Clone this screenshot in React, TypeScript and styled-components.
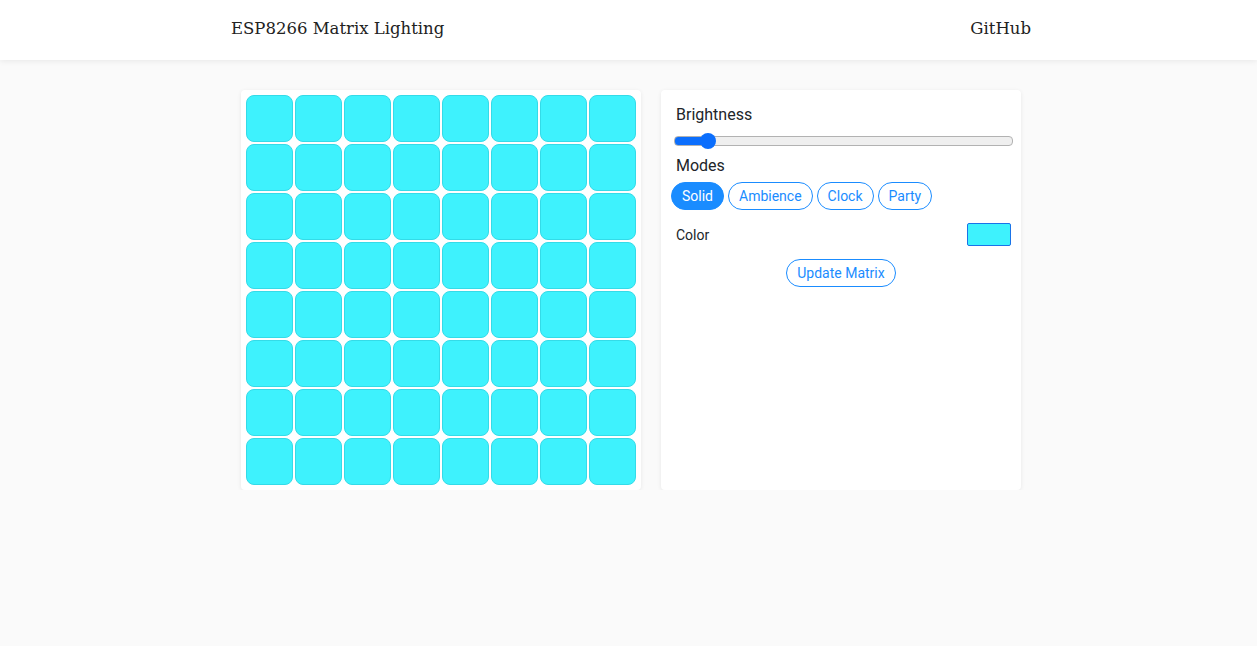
import React, { useState } from 'react';
import styled, { createGlobalStyle } from 'styled-components';

const GlobalStyle = createGlobalStyle`
  html, body {
    margin: 0;
    padding: 0;
    background: #fafafa;
    font-family: Roboto, "Liberation Sans", sans-serif;
    color: #212529;
  }
`;

const Header = styled.header`
  height: 60px;
  background: #ffffff;
  box-shadow: 0 1px 6px rgba(0, 0, 0, 0.08);
  display: flex;
  justify-content: center;
  padding-left: 5px;
`;

const HeaderInner = styled.div`
  width: 800px;
  display: flex;
  align-items: center;
  justify-content: space-between;
  padding-bottom: 4px;
  font-family: "DejaVu Serif", "Liberation Serif", serif;
  font-size: 16.5px;
  color: #222;
`;

const Main = styled.main`
  display: flex;
  justify-content: center;
  gap: 20px;
  padding: 30px 0 0 5px;
`;

const Card = styled.div<{ $w: number }>`
  width: ${({ $w }) => $w}px;
  height: 400px;
  box-sizing: border-box;
  background: #ffffff;
  border-radius: 4px;
  box-shadow: 0 1px 4px rgba(0, 0, 0, 0.08);
`;

const Grid = styled.div`
  display: grid;
  grid-template-columns: repeat(8, 47px);
  grid-auto-rows: 47px;
  gap: 2px;
  padding: 5px;
`;

const Cell = styled.div<{ $color: string }>`
  background: ${({ $color }) => $color};
  border: 1px solid #34dbe8;
  border-radius: 8px;
`;

const Panel = styled(Card)`
  padding: 15px 10px 10px 10px;
  display: flex;
  flex-direction: column;
`;

const Label = styled.div`
  font-size: 16px;
  padding-left: 5px;
  line-height: 20px;
`;

const Slider = styled.input<{ $pct: number }>`
  -webkit-appearance: none;
  appearance: none;
  width: 337px;
  height: 8px;
  margin: 11px 0 10px 3px;
  border-radius: 4px;
  border: 1px solid #b2b2b2;
  background: linear-gradient(
    to right,
    #0b6efd 0%,
    #0b6efd ${({ $pct }) => $pct}%,
    #efefef ${({ $pct }) => $pct}%,
    #efefef 100%
  );
  outline: none;

  &::-webkit-slider-thumb {
    -webkit-appearance: none;
    width: 16px;
    height: 16px;
    border-radius: 50%;
    background: #0b6efd;
    border: none;
  }
`;

const Modes = styled.div`
  display: flex;
  gap: 4px;
  margin-top: 6px;
`;

const Pill = styled.button<{ $active?: boolean }>`
  height: 28px;
  padding: 0 10px;
  border-radius: 14px;
  border: 1px solid #1a8cff;
  background: ${({ $active }) => ($active ? '#1a8cff' : '#ffffff')};
  color: ${({ $active }) => ($active ? '#ffffff' : '#1a8cff')};
  font-family: Roboto, "Liberation Sans", sans-serif;
  font-size: 14px;
  cursor: pointer;
`;

const ColorRow = styled.div`
  display: flex;
  align-items: center;
  justify-content: space-between;
  margin-top: 13px;
  padding: 0 0 0 5px;
  font-size: 14px;
`;

const Swatch = styled.div<{ $color: string }>`
  width: 42px;
  height: 21px;
  background: ${({ $color }) => $color};
  border: 1px solid #1a73e8;
  border-radius: 2px;
`;

const Center = styled.div`
  display: flex;
  justify-content: center;
  margin-top: 13px;
`;

const modes = ['Solid', 'Ambience', 'Clock', 'Party'];
const cellColor = '#3ef2fd';

export default function App() {
  const [mode, setMode] = useState('Solid');
  const [brightness, setBrightness] = useState(20);
  const pct = (brightness / 255) * 100;

  return (
    <>
      <GlobalStyle />
      <Header>
        <HeaderInner>
          <span>ESP8266 Matrix Lighting</span>
          <span>GitHub</span>
        </HeaderInner>
      </Header>
      <Main>
        <Card $w={400}>
          <Grid>
            {Array.from({ length: 64 }).map((_, i) => (
              <Cell key={i} $color={cellColor} />
            ))}
          </Grid>
        </Card>
        <Panel $w={360}>
          <Label>Brightness</Label>
          <Slider
            type="range"
            min={0}
            max={255}
            value={brightness}
            $pct={pct}
            onChange={(e) => setBrightness(Number(e.target.value))}
          />
          <Label>Modes</Label>
          <Modes>
            {modes.map((m) => (
              <Pill key={m} $active={m === mode} onClick={() => setMode(m)}>
                {m}
              </Pill>
            ))}
          </Modes>
          <ColorRow>
            <span>Color</span>
            <Swatch $color={cellColor} />
          </ColorRow>
          <Center>
            <Pill>Update Matrix</Pill>
          </Center>
        </Panel>
      </Main>
    </>
  );
}
